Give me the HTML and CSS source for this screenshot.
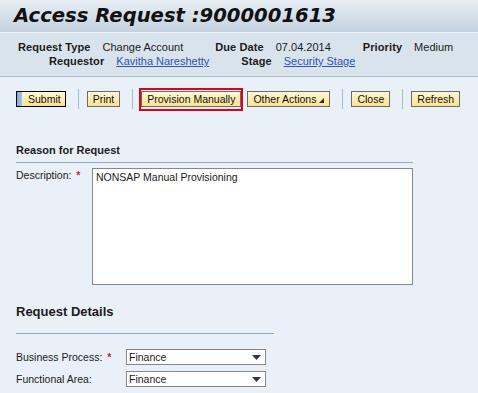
FILE: index.html
```html
<!DOCTYPE html>
<html lang="en">
<head>
    <meta charset="UTF-8">
    <title>Access Request</title>
    <link rel="stylesheet" href="styles.css">
</head>
<body>

<div class="page-title">
    <h1>Access Request :9000001613</h1>
</div>

<div class="summary">
    <div class="summary-row row-first">
        <span class="pair"><b>Request Type</b><span>Change Account</span></span>
        <span class="pair"><b>Due Date</b><span>07.04.2014</span></span>
        <span class="pair"><b>Priority</b><span>Medium</span></span>
    </div>
    <div class="summary-row row-second">
        <span class="pair"><b>Requestor</b><a href="#">Kavitha Nareshetty</a></span>
        <span class="pair"><b>Stage</b><a href="#">Security Stage</a></span>
    </div>
</div>

<div class="toolbar">
    <button class="btn btn-submit">Submit</button>
    <span class="sep"></span>
    <button class="btn">Print</button>
    <span class="sep"></span>
    <span class="highlight"><button class="btn">Provision Manually</button></span>
    <button class="btn btn-menu">Other Actions <span class="corner"></span></button>
    <span class="sep"></span>
    <button class="btn">Close</button>
    <span class="sep"></span>
    <button class="btn">Refresh</button>
</div>

<div class="section reason">
    <h3>Reason for Request</h3>
    <div class="field">
        <label class="field-label">Description: <span class="req">*</span></label>
        <textarea class="desc" readonly>NONSAP Manual Provisioning</textarea>
    </div>
</div>

<div class="section details">
    <h3>Request Details</h3>
    <div class="field">
        <label class="field-label wide">Business Process: <span class="req">*</span></label>
        <div class="dropdown">
            <span>Finance</span>
            <svg width="9" height="5" viewBox="0 0 9 5"><path d="M0 0H9L4.5 5Z" fill="#33334a"/></svg>
        </div>
    </div>
    <div class="field">
        <label class="field-label wide">Functional Area:</label>
        <div class="dropdown">
            <span>Finance</span>
            <svg width="9" height="5" viewBox="0 0 9 5"><path d="M0 0H9L4.5 5Z" fill="#33334a"/></svg>
        </div>
    </div>
</div>

</body>
</html>
```

FILE: styles.css
```css
/* SAP-ish access request screen */
body {
    margin: 0;
    font-family: "Liberation Sans", Arial, sans-serif;
    font-size: 11px;
    color: #1b1b1b;
    background: #e9f0f7;
    height: 393px;
    overflow: hidden;
}
.page-title {
    height: 32px;
    padding-left: 14px;
    background: linear-gradient(#e8eef4, #c3d1df);
    border-bottom: 1px solid #eef3f8;
}
.page-title h1 {
    margin: 0;
    font-family: "DejaVu Sans", Verdana, sans-serif;
    font-size: 19.6px;
    font-weight: bold;
    font-style: italic;
    line-height: 32px;
    color: #111;
}
.summary {
    background: #d9e3ec;
    padding: 7px 0 8px;
    border-bottom: 1px solid #aebbc8;
}
.summary-row {
    display: flex;
    gap: 32px;
    line-height: 14px;
}
.summary-row b {
    letter-spacing: 0.1px;
}
.row-first {
    padding-left: 18px;
}
.row-second {
    padding-left: 49px;
}
.pair {
    display: flex;
    gap: 12px;
}
.pair a {
    color: #2f52b4;
}
.toolbar {
    display: flex;
    align-items: center;
    padding: 14px 16px 0;
    height: 16px;
}
.btn {
    font-family: "Liberation Sans", Arial, sans-serif;
    font-size: 10.5px;
    color: #111;
    height: 16px;
    line-height: 14px;
    padding: 0 5px;
    margin: 0;
    border: 1px solid #6b6b6b;
    background: linear-gradient(#fff8d6, #fbe28e);
    cursor: pointer;
}
.btn-submit {
    border-color: #000;
    padding: 0 4px 0 11px;
    background: linear-gradient(to right, #7ea8dc 0, #a9c5e8 5px, transparent 5px), linear-gradient(#fff8d6, #fbe28e);
}
.btn-menu {
    margin-left: 4px;
    display: flex;
    align-items: center;
    gap: 3px;
}
.corner {
    width: 0;
    height: 0;
    margin-top: 3px;
    border-left: 5px solid transparent;
    border-bottom: 5px solid #2b2b2b;
}
.sep {
    width: 1px;
    height: 20px;
    background: #a6bbd0;
    margin: 0 8px 0 12px;
}
.highlight {
    display: flex;
    border: 2px solid #e0001a;
    padding: 1px 0 2px;
    margin-left: -2px;
}
.section h3 {
    margin: 0;
    font-weight: bold;
    color: #1b1b1b;
}
.reason {
    margin: 36px 0 0 16px;
    width: 397px;
}
.reason h3 {
    font-size: 11px;
    line-height: 14px;
    padding-bottom: 5px;
    border-bottom: 1px solid #94aac3;
    margin-bottom: 5px;
}
.field {
    display: flex;
    align-items: flex-start;
}
.field-label {
    width: 76px;
    font-size: 10.5px;
    line-height: 14px;
    flex-shrink: 0;
}
.field-label.wide {
    width: 110px;
    line-height: 16px;
}
.req {
    color: #e0102e;
    font-weight: bold;
    margin-left: 2px;
}
.desc {
    width: 321px;
    height: 117px;
    box-sizing: border-box;
    margin: 0;
    padding: 2px 3px;
    border: 1px solid #878787;
    background: #fff;
    font-family: "Liberation Sans", Arial, sans-serif;
    font-size: 10.5px;
    line-height: 13px;
    color: #1b1b1b;
    resize: none;
}
.details {
    margin: 18px 0 0 16px;
    width: 258px;
}
.details h3 {
    font-size: 13px;
    line-height: 17px;
    padding-bottom: 13px;
    border-bottom: 1px solid #94aac3;
    margin-bottom: 15px;
}
.details .field + .field {
    margin-top: 6px;
}
.dropdown {
    width: 140px;
    height: 16px;
    box-sizing: border-box;
    border: 1px solid #878787;
    background: #fff;
    display: flex;
    align-items: center;
    justify-content: space-between;
    padding: 0 4px 0 2px;
    font-size: 10.5px;
    flex-shrink: 0;
}
```
